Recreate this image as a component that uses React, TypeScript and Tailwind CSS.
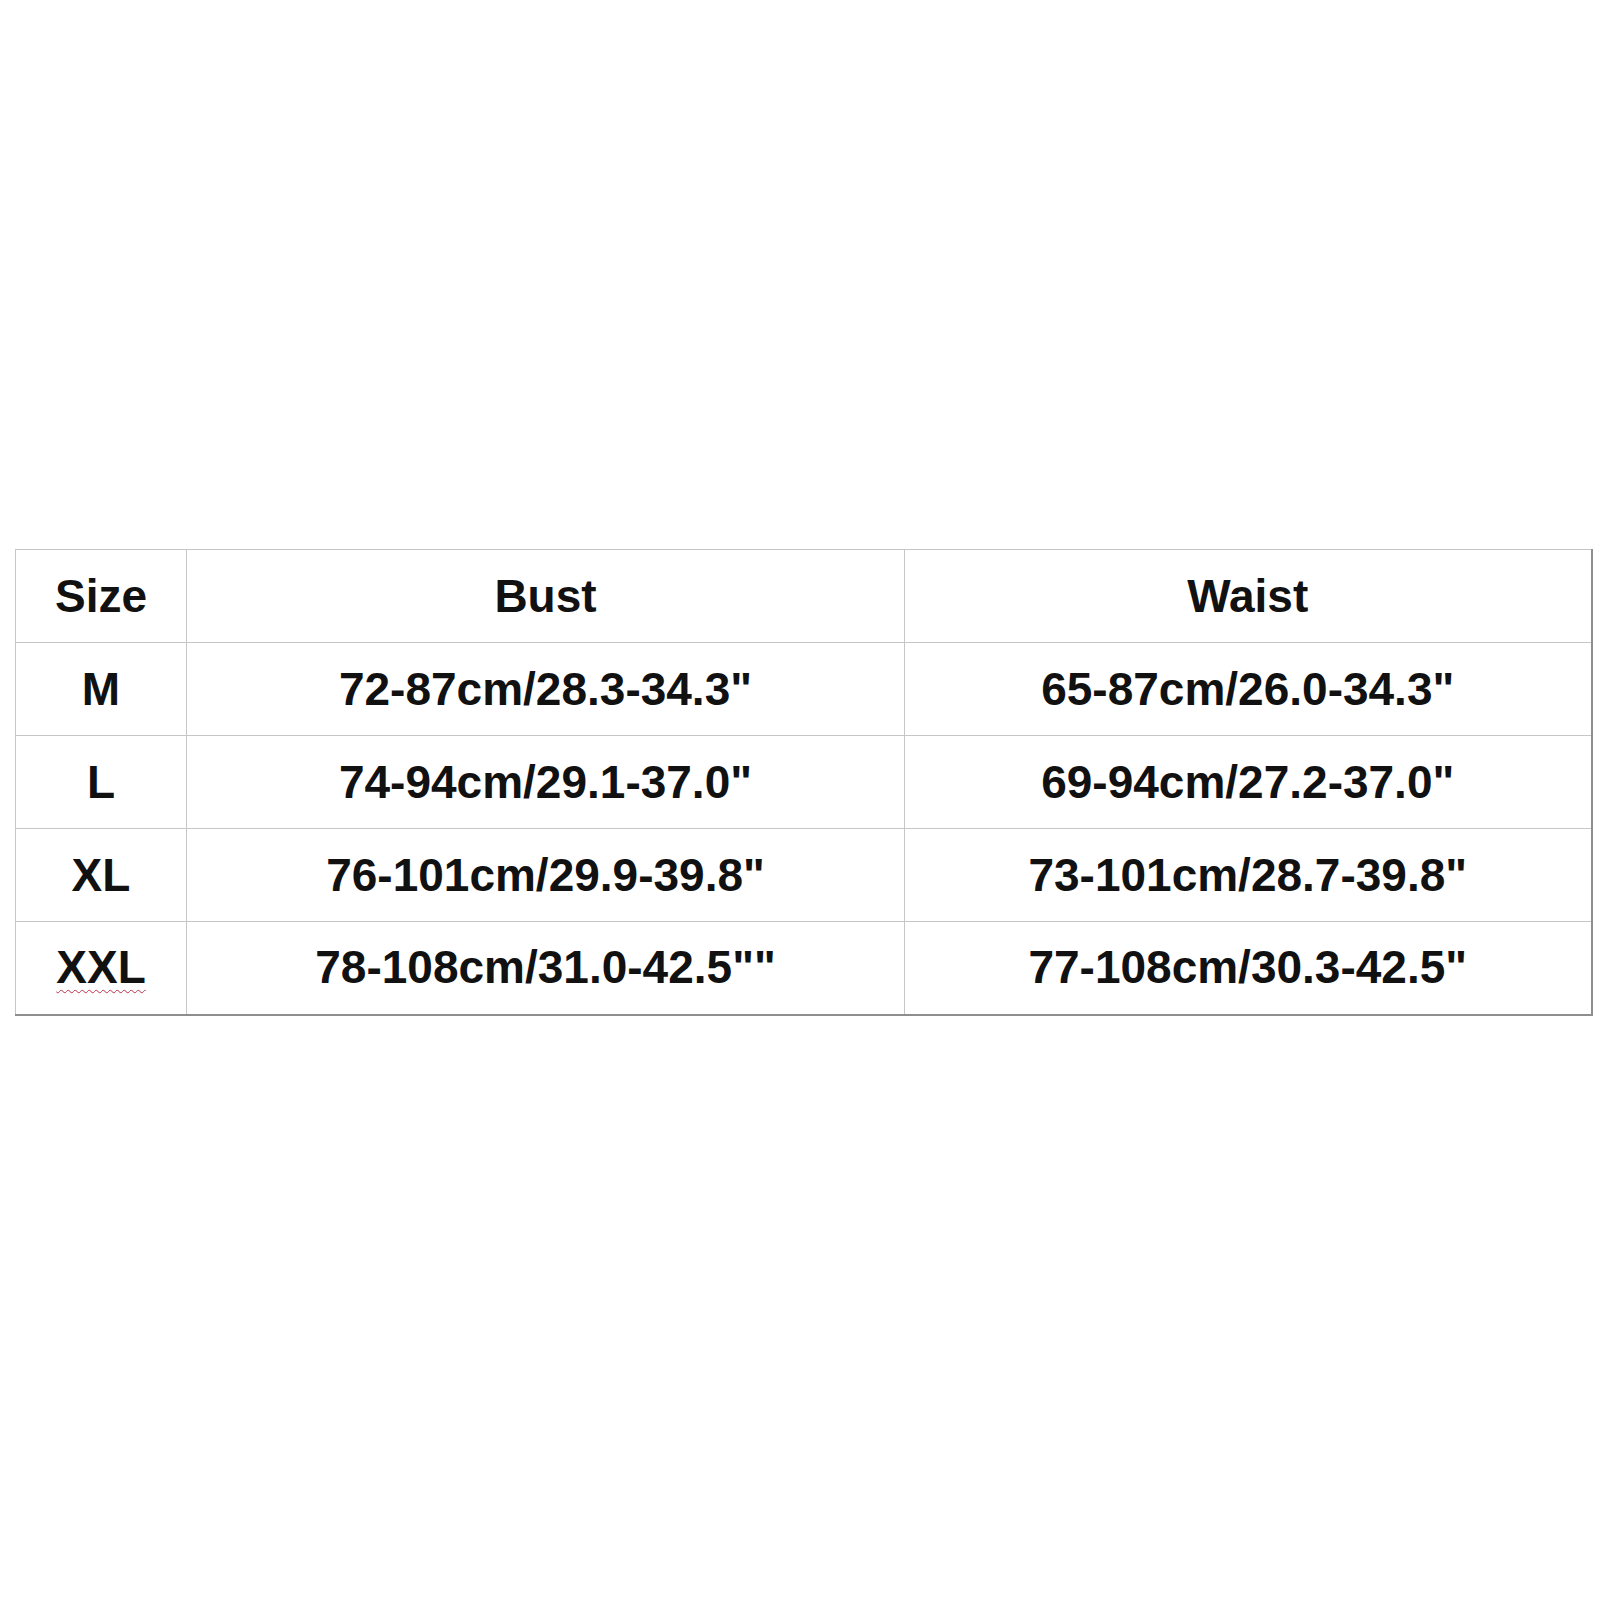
const rows = [
  { size: "M", bust: "72-87cm/28.3-34.3\"", waist: "65-87cm/26.0-34.3\"" },
  { size: "L", bust: "74-94cm/29.1-37.0\"", waist: "69-94cm/27.2-37.0\"" },
  { size: "XL", bust: "76-101cm/29.9-39.8\"", waist: "73-101cm/28.7-39.8\"" },
  { size: "XXL", bust: "78-108cm/31.0-42.5\"\"", waist: "77-108cm/30.3-42.5\"" },
];

const cell = "border border-[#c6c6c6] h-[93px] p-0 text-center align-middle";

export default function App() {
  return (
    <div className="min-h-[1600px] w-[1600px] bg-white pt-[549px] pl-[15px] font-['Liberation_Sans',Arial,sans-serif] text-[46px] font-bold text-[#111]">
      <table className="border-collapse table-fixed">
        <colgroup>
          <col className="w-[171px]" />
          <col className="w-[718px]" />
          <col className="w-[687px]" />
        </colgroup>
        <tbody>
          <tr>
            <td className={cell}>Size</td>
            <td className={cell}>Bust</td>
            <td className={`${cell} border-r-2 border-r-[#8e8e8e]`}>Waist</td>
          </tr>
          {rows.map((r, i) => {
            const last = i === rows.length - 1;
            const bottom = last ? " border-b-2 border-b-[#8e8e8e]" : "";
            return (
              <tr key={r.size}>
                <td className={cell + bottom}>
                  {r.size === "XXL" ? (
                    <span className="underline decoration-wavy decoration-[#c0304a] decoration-1 underline-offset-[6px]">
                      {r.size}
                    </span>
                  ) : (
                    r.size
                  )}
                </td>
                <td className={cell + bottom}>{r.bust}</td>
                <td className={`${cell}${bottom} border-r-2 border-r-[#8e8e8e]`}>{r.waist}</td>
              </tr>
            );
          })}
        </tbody>
      </table>
    </div>
  );
}
